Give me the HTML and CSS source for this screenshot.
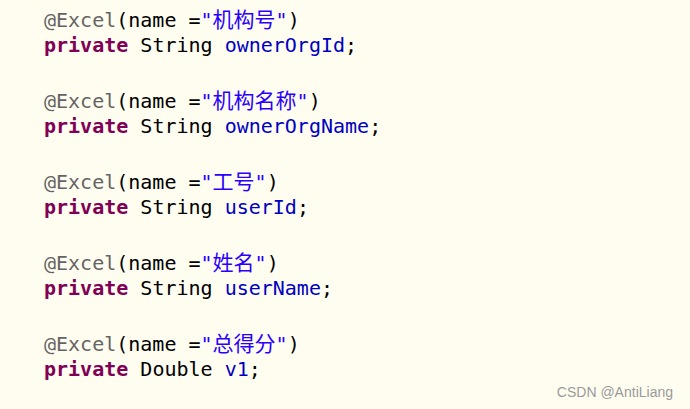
FILE: index.html
```html
<!DOCTYPE html>
<html lang="zh">
<head>
<meta charset="utf-8">
<link rel="stylesheet" href="styles.css">
</head>
<body>
<div class="editor">
  <div class="line"><span class="ann">@Excel</span>(name =<span class="str">"<span class="cjk">机构号</span>"</span>)</div>
  <div class="line"><span class="kw">private</span> String <span class="fld">ownerOrgId</span>;</div>
  <div class="line"></div>
  <div class="line"><span class="ann">@Excel</span>(name =<span class="str">"<span class="cjk">机构名称</span>"</span>)</div>
  <div class="line"><span class="kw">private</span> String <span class="fld">ownerOrgName</span>;</div>
  <div class="line"></div>
  <div class="line"><span class="ann">@Excel</span>(name =<span class="str">"<span class="cjk">工号</span>"</span>)</div>
  <div class="line"><span class="kw">private</span> String <span class="fld">userId</span>;</div>
  <div class="line"></div>
  <div class="line"><span class="ann">@Excel</span>(name =<span class="str">"<span class="cjk">姓名</span>"</span>)</div>
  <div class="line"><span class="kw">private</span> String <span class="fld">userName</span>;</div>
  <div class="line"></div>
  <div class="line"><span class="ann">@Excel</span>(name =<span class="str">"<span class="cjk">总得分</span>"</span>)</div>
  <div class="line"><span class="kw">private</span> Double <span class="fld">v1</span>;</div>
</div>
<div class="watermark">CSDN @AntiLiang</div>
</body>
</html>
```
FILE: styles.css
```css
html, body {
  margin: 0;
  padding: 0;
  background: #fffdf0;
  width: 690px;
  height: 409px;
  overflow: hidden;
}
body {
  position: relative;
}
.editor {
  padding: 5px 0 0 44px;
  font-family: "DejaVu Sans Mono", "Noto Sans CJK SC", monospace;
  font-size: 20px;
  color: #000;
}
.line {
  height: 27px;
  line-height: 27px;
  white-space: pre;
}
.ann { color: #646464; }
.kw { color: #7f0055; font-weight: bold; }
.fld { color: #0000c0; }
.str { color: #2a00ff; }
.cjk {
  font-family: "Noto Sans CJK SC", sans-serif;
  font-size: 21px;
}
.watermark {
  position: absolute;
  right: 17px;
  top: 384px;
  font-family: "Liberation Sans", Arial, sans-serif;
  font-size: 14px;
  color: #9a9a9a;
}
```
